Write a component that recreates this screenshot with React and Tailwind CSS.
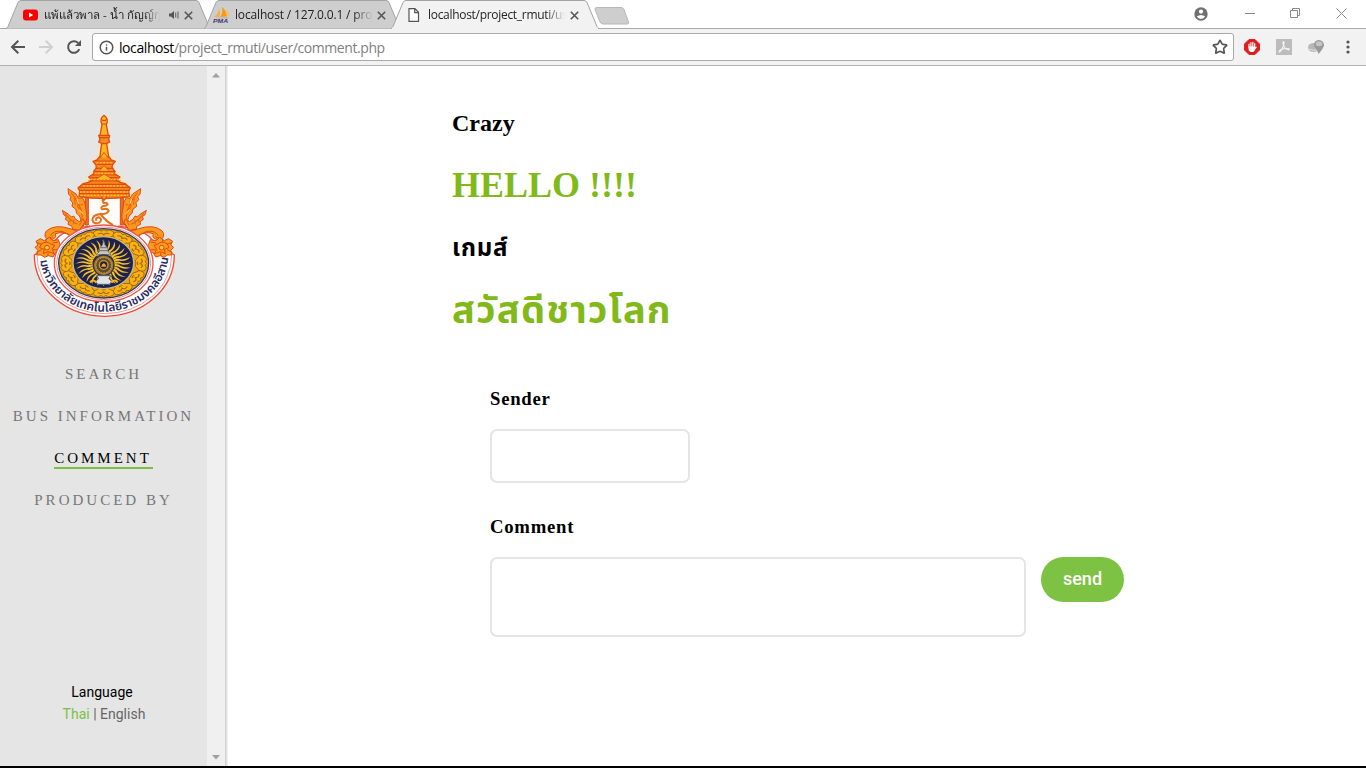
import { Star, Info } from "lucide-react";

const UI = "font-['Open_Sans','Noto_Sans',sans-serif]";

function TabShape({ width, active }) {
  const w = width;
  return (
    <svg className="absolute inset-0" width={w} height="29" viewBox={`0 0 ${w} 29`}>
      <path
        d={`M0 28.500 Q1.500 28 2 26.500 L12 2.500 Q13 0.500 15 0.500 H${w - 15} Q${w - 13} 0.500 ${w - 12} 2.500 L${w - 2} 26.500 Q${w - 1.5} 28 ${w} 28.500`}
        fill={active ? "#f2f2f2" : "#cecece"}
        stroke="#a3a3a3"
      />
      {active && <path d={`M1 28.500 H${w - 1}`} stroke="#f2f2f2" strokeWidth="2" />}
    </svg>
  );
}

function CloseX() {
  return (
    <svg className="shrink-0" width="9" height="9" viewBox="0 0 9 9"><path d="M.8.8 8.200 8.200M8.200.8.8 8.200" stroke="#555" strokeWidth="1.600" /></svg>
  );
}

function Tabs() {
  return (
    <div className={`flex h-[29px] items-start border-b border-[#aaa] bg-white pl-[6px] text-[12px] text-[#222] ${UI}`}>
      <div className="relative h-[29px] w-[205px] shrink-0">
        <TabShape width={205} />
        <div className="relative flex h-[30px] items-center pl-[17px]">
          <svg className="shrink-0" width="15" height="12" viewBox="0 0 15 12">
            <rect y="0.500" width="15" height="11" rx="3" fill="#f00" />
            <path d="M6 3.500 10.200 6 6 8.500Z" fill="#fff" />
          </svg>
          <span className="ml-[6px] w-[116px] overflow-hidden whitespace-nowrap text-[11.5px] leading-[20px] [mask-image:linear-gradient(90deg,#000_86%,transparent)]">แพ้แล้วพาล - น้ำ กัญญ์กุล</span>
          <svg className="ml-[9px] shrink-0" width="11" height="10" viewBox="0 0 11 10">
            <path d="M0 3.500H2L5 1V9L2 6.500H0Z" fill="#555" />
            <path d="M6.700 2.500V7.500M9 1.500V8.500" stroke="#666" strokeWidth="1.100" />
          </svg>
          <span className="ml-[4px] flex"><CloseX /></span>
        </div>
      </div>
      <div className="relative -ml-[7px] h-[29px] w-[197px] shrink-0">
        <TabShape width={197} />
        <div className="relative flex h-[30px] items-center pl-[9px]">
          <svg className="shrink-0" width="17" height="16" viewBox="0 0 17 16">
            <path d="M1 10Q5 7 6 2Q8 6 6.500 10Z" fill="#f8ad45" />
            <path d="M7.300 10Q10 6 9 0Q13 3 14 9.500Z" fill="#f89c0e" />
            <path d="M12 2Q16 5 16.500 9.500L14.600 9.500Q14 5 12 2Z" fill="#f6ba68" />
            <path d="M3 10.800 16 10.200 14 11.500H4Z" fill="#aeb0c4" />
            <text x="0" y="15.800" fontFamily="Liberation Sans" fontSize="6.200" fontWeight="700" fontStyle="italic" fill="#3a376e" textLength="15" lengthAdjust="spacingAndGlyphs">PMA</text>
          </svg>
          <span className="ml-[5px] w-[138px] overflow-hidden whitespace-nowrap tracking-[-0.16px] [mask-image:linear-gradient(90deg,#000_86%,transparent)]">localhost / 127.0.0.1 / proj</span>
          <span className="ml-[4px] flex"><CloseX /></span>
        </div>
      </div>
      <div className="relative -ml-[10px] h-[29px] w-[208px] shrink-0">
        <TabShape width={208} active />
        <div className="relative flex h-[30px] items-center pl-[17px]">
          <svg className="shrink-0" width="12" height="14" viewBox="0 0 12 14">
            <path d="M1 .7H7L10.500 4.300V13.300H1ZM6.700 1V4.600H10.300" fill="#fff" stroke="#555" strokeWidth="1.200" />
          </svg>
          <span className="ml-[8px] w-[137px] overflow-hidden whitespace-nowrap tracking-[-0.3px] [mask-image:linear-gradient(90deg,#000_86%,transparent)]">localhost/project_rmuti/us</span>
          <span className="ml-[5px] flex"><CloseX /></span>
        </div>
      </div>
      <svg className="mt-[6px] -ml-[5px]" width="36" height="20" viewBox="0 0 36 20">
        <path d="M3 1.500H27Q29 1.500 30 3.500L34.500 16Q35 18 33 18H9Q7 18 6 16L1 3.500Q.5 1.500 3 1.500Z" fill="#cecece" stroke="#b8b8b8" />
      </svg>
      <div className="ml-auto flex h-[27px] items-center text-[#888]">
        <svg width="14" height="14" viewBox="0 0 14 14">
          <circle cx="7" cy="7" r="6.700" fill="#707070" />
          <circle cx="7" cy="4.600" r="2.100" fill="#fff" />
          <path d="M2.800 9.600Q7 6.300 11.200 9.600Q9.500 12 7 12Q4.500 12 2.800 9.600Z" fill="#fff" />
        </svg>
        <svg className="ml-[37px]" width="11" height="11" viewBox="0 0 11 11"><path d="M0 5.500H10" stroke="currentColor" /></svg>
        <svg className="ml-[34px]" width="11" height="11" viewBox="0 0 11 11" fill="none" stroke="currentColor"><path d="M.5 2.500H7.500V9.500H.5ZM2.500 2.500V.5H9.500V7.500H7.500" /></svg>
        <svg className="mr-[19px] ml-[35px]" width="11" height="11" viewBox="0 0 11 11"><path d="M.5.5 10.500 10.500M10.500.5.5 10.500" stroke="currentColor" /></svg>
      </div>
    </div>
  );
}

function Toolbar() {
  return (
    <div className="flex h-[37px] items-center border-b border-[#b2b2b2] bg-[#f2f2f2]">
      <svg className="ml-[10px]" width="16" height="16" viewBox="0 0 16 16" fill="none" stroke="#555" strokeWidth="2"><path d="M15 8H2.500M8.300 1.700 2 8 8.300 14.300" /></svg>
      <svg className="ml-[12px]" width="16" height="16" viewBox="0 0 16 16" fill="none" stroke="#d0d0d0" strokeWidth="2"><path d="M1 8H13.500M7.700 1.700 14 8 7.700 14.300" /></svg>
      <svg className="ml-[12px]" width="16" height="16" viewBox="0 0 16 16"><path d="M13.300 10.200A5.800 5.800 0 1 1 12.100 4" fill="none" stroke="#555" strokeWidth="2" /><path d="M15 1V7H9Z" fill="#555" /></svg>
      <div className="ml-[10px] flex h-[28px] w-[1142px] items-center rounded-[3px] border border-[#a9a9a9] bg-white pr-[5px] pl-[6px]">
        <Info className="size-[15px] text-[#555]" strokeWidth={2.4} />
        <span className={`ml-[5px] text-[14px] tracking-[-0.42px] text-[#808080] ${UI}`}><span className="text-black">localhost</span>/project_rmuti/user/comment.php</span>
        <Star className="ml-auto size-[16px] text-[#555]" strokeWidth={2.5} />
      </div>
      <svg className="ml-[10px]" width="16" height="16" viewBox="0 0 16 16">
        <path d="M5 .5H11L15.500 5V11L11 15.500H5L.5 11V5Z" fill="#e51b1b" stroke="#e02525" />
        <path d="M5 8V5M6.900 8V3.500M8.800 8V3.300M10.700 8V4.500M10.800 10L12.200 8.200" stroke="#fff" strokeWidth="1.200" strokeLinecap="round" />
        <path d="M4.400 7.500H11.300L11 11L9.500 13H6.500L4.700 11.500Z" fill="#fff" />
      </svg>
      <svg className="ml-[16px]" width="16" height="16" viewBox="0 0 16 16">
        <path d="M0 0H16V16H0Z" fill="#bcbcbc" />
        <path d="M7.500 2.500C9 3 7.500 7 6 10C4.500 13 3 13.500 3 12.500C3.500 10.500 8 9.500 12 9.500C14 9.700 13.500 11 12 10.800C9 10 7 6.500 7 4Q6.800 2.600 7.500 2.500Z" fill="none" stroke="#f4f4f4" strokeWidth="1.100" />
      </svg>
      <svg className="ml-[16px]" width="18" height="16" viewBox="0 0 18 16">
        <ellipse cx="5.500" cy="8.500" rx="5.500" ry="4.500" fill="#b8b8b8" />
        <path d="M1 10Q5 12 9 11" stroke="#e1e1e1" fill="none" />
        <path d="M11 1A5 5 0 0 1 16 6.500Q15 10 10.500 15Q9.500 11 6 7A4.900 4.900 0 0 1 11 1Z" fill="#999" />
        <ellipse cx="11" cy="4.800" rx="3.300" ry="2.500" fill="#c6c6c6" />
      </svg>
      <svg className="ml-[20px]" width="4" height="14" viewBox="0 0 4 14" fill="#555"><circle cx="2" cy="2" r="1.600" /><circle cx="2" cy="7" r="1.600" /><circle cx="2" cy="12" r="1.600" /></svg>
    </div>
  );
}

const around = (n) => Array.from({ length: n }, (_, i) => (i * 360) / n);

function NagaSide() {
  return (
    <g fill="#fa9a1c" stroke="#df4a16" strokeWidth="3" strokeLinejoin="round">
      <path d="M196 278H205V360H196Z" fill="#f0702a" />
      <path d="M210 362Q176 385 150 371Q105 356 79 378Q68 396 86 405L100 402Q112 396 106 386Q134 377 151 394Q180 399 212 374Z" />
      <path d="M92 392Q98 376 126 379Q150 389 158 397M88 396Q94 403 100 394" fill="none" />
      <path d="M144 251L168 267L176 280L187 278L194 291L200 325Q206 352 176 377L160 371L182 352Q184 334 170 325L167 312L156 304L158 293L150 284L153 275L146 268Z" />
      <path d="M127 316L146 328L154 336L161 333L167 343L178 350L190 342L194 352L178 376L157 372L156 364L144 358L146 350L136 343L139 335L131 329Z" />
      <path d="M153 263Q173 286 183 314Q193 340 178 362M163 277L166 300M176 290L173 305L184 318M189 298L181 300M135 325Q149 345 172 358M150 341V352M162 344L160 358" fill="none" stroke="#ec6417" strokeWidth="3.500" />
      <path d="M171 282L176 296M178 314L190 328" fill="none" stroke="#ffd9a0" />
      <path d="M48 409L61 401L73 407L87 397L98 407L115 404L120 418L129 427L117 440L106 444L99 456L85 452L74 457L63 450L50 450L54 436L45 427L54 420Z" />
      <path d="M64 417Q80 406 92 417L104 421L96 433L103 446L84 440L70 446L73 433L59 428Z" fill="#f99a18" />
      <path d="M51 413L66 418M49 442L65 434M99 434L117 435M98 414L114 411M78 402V411M84 443V453" fill="none" />
      <circle cx="81" cy="428" r="7" fill="#ffc438" />
    </g>
  );
}

function Crest() {
  return (
    <svg width="170" height="220" viewBox="0 0 510 660" role="img">
      <path d="M43 450A209 181 0 0 0 463 450L398 406Q366 362 252 362Q138 362 106 406Z" fill="#fff" stroke="#fae7b5" strokeWidth="9" />
      <path d="M43 450A209 183 0 0 0 463 450L398 406Q366 362 252 362Q138 362 106 406Z" fill="#fff" stroke="#e54847" strokeWidth="4" />
      <path d="M51 451A202 175 0 0 0 455 451" fill="none" stroke="#ef8580" strokeWidth="2.500" />
      <path d="M204 364V280H300V364Z" fill="#fdfcf8" />
      <NagaSide />
      <g transform="translate(506 0) scale(-1 1)"><NagaSide /></g>
      <g stroke="#fae7b5" strokeWidth="9" fill="none">
        <path d="M252 31Q238 42 246 59L242 115L239 155L225 164L229 196L207 216L189 238L174 252L178 274M252 31Q266 42 260 59L264 115L266 155L280 164L277 196L299 216L316 238L331 252L328 274" strokeLinejoin="round" />
      </g>
      <g fill="#fcb421" stroke="#df4d14" strokeWidth="4" strokeLinejoin="round">
        <path d="M252 31Q237 42 246 59L240 91L245 115L242 136L240 155H266L263 136L260 115L265 91L259 59Q268 43 252 31Z" />
        <path d="M236 91H269L266 103L269 111L259 116H246L236 111L240 103Z" fill="#f48a1c" />
        <path d="M238 156H268L274 165L286 169L277 180L276 190L284 197L283 206L300 216L290 226L300 232L316 236L331 249L326 258L328 275Q253 286 177 275L179 258L174 249L189 236L206 232L216 226L206 216L222 206L222 197L229 190L228 180L219 169L231 165Z" fill="#f48a1c" />
        <path d="M244 43Q252 51 260 43M246 57H259M240 98H266M226 168H281M231 178H275M226 190H281M220 200H287M216 210H290M212 218H295M205 228H302M186 238H319M176 247H330M177 256H329M177 266H328" fill="none" stroke="#e34912" strokeWidth="3.500" />
        <path d="M230 173H277M224 205H285M211 223H297M190 243H319M180 261H327M182 271H325" fill="none" stroke="#ffc331" strokeDasharray="5 5" strokeWidth="4" />
        <path d="M241 158L252 142L264 158M239 197L252 182L267 197M229 222L252 207L276 222" fill="#ffb625" stroke="#e45a16" strokeWidth="3" />
        <path d="M252 280Q244 287 251 294Q261 292 263 298Q258 304 249 303Q239 309 248 313Q264 308 266 318Q259 329 241 327Q217 330 217 345Q221 359 238 353Q249 343 237 337Q226 337 229 347M241 327Q262 353 279 360" fill="none" stroke="#e6701a" strokeWidth="6" />
        <path d="M244 275L252 286L261 275" fill="#f69823" />
      </g>
      <ellipse cx="251" cy="475" rx="148" ry="115" fill="#fff" stroke="#ee5551" strokeWidth="4" />
      <ellipse cx="251" cy="475" rx="141" ry="109" fill="#fff" stroke="#f09690" strokeWidth="3" />
      <ellipse cx="251" cy="475" rx="135" ry="104" fill="#e9a41b" stroke="#333861" strokeWidth="4" />
      <g transform="translate(251 475) scale(1 .78)">
        {around(12).map((a) => (
          <g key={a} transform={`rotate(${a})`}>
            <path d="M-27 -124Q-15 -133 -6 -124Q0 -134 8 -124Q16 -132 27 -124Q38 -106 21 -102Q14 -92 0 -95Q-13 -92 -21 -102Q-38 -108 -27 -124Z" fill="#ffb00c" stroke="#7a5a2a" strokeWidth="2.500" />
            <path d="M-17 -112Q-6 -121 0 -110Q8 -121 17 -112M-6 -103Q0 -98 6 -103" fill="none" stroke="#9b6c20" strokeWidth="4" />
          </g>
        ))}
      </g>
      <ellipse cx="250" cy="473" rx="91" ry="78" fill="#1c2152" stroke="#c7b987" strokeWidth="4" />
      <g transform="translate(250 474) scale(1 .84)">
        {around(28).map((a) => (
          <path key={a} transform={`rotate(${a})`} d="M-3 -32Q-8 -44 -1 -54Q3 -64 -3 -84Q9 -70 5 -55Q0 -44 4 -32Z" fill="#f7bf20" />
        ))}
      </g>
      <path d="M251 404L255 421L263 428L264 440L272 447L268 457H233L230 447L238 440L239 428L247 421Z" fill="#c9c7b7" stroke="#555b70" strokeWidth="2" />
      <path d="M241 428H261M239 437H264M234 449H269" stroke="#6c6d72" strokeWidth="3" />
      <circle cx="251" cy="481" r="31" fill="#a77d28" stroke="#323351" strokeWidth="4" />
      <circle cx="251" cy="481" r="23" fill="#5c4c39" stroke="#d69e28" strokeWidth="3" strokeDasharray="5 3" />
      <circle cx="251" cy="480" r="13" fill="#202246" stroke="#d29c27" strokeWidth="4" />
      <path d="M243 485Q252 465 259 485Z" fill="#eea920" />
      <path d="M230 512H272L267 521L275 529L269 538H233L227 529L236 521Z" fill="#e1e4e5" stroke="#525c79" strokeWidth="3" />
      <path d="M210 532Q220 520 229 533M274 533Q284 520 293 532" fill="none" stroke="#f2b91e" strokeWidth="6" />
      <path id="crest-ring" d="M60 466C74 566 165 620 252 620C339 620 429 566 444 466" fill="none" />
      <text fill="#272b63" fontFamily="'Noto Sans','Noto Sans Thai',sans-serif" fontSize="35" fontWeight="600">
        <textPath href="#crest-ring" textLength="546" lengthAdjust="spacingAndGlyphs">มหาวิทยาลัยเทคโนโลยีราชมงคลอีสาน</textPath>
      </text>
    </svg>
  );
}

const links = ["SEARCH", "BUS INFORMATION", "COMMENT", "PRODUCED BY"];

function Sidebar() {
  return (
    <aside className="flex w-[207px] shrink-0 flex-col items-center bg-[#e5e5e5]">
      <div className="mt-[39px] mr-[-3px] h-[220px] w-[170px]"><Crest /></div>
      <nav className="mt-[40px] flex flex-col items-center gap-[21px] font-['Liberation_Serif',serif] text-[15px] leading-[19px] tracking-[3px] text-[#777]">
        {links.map((t) => (
          <a key={t} className={t === "COMMENT" ? "mb-px h-[20px] border-b-2 border-[#7ac143] pr-px whitespace-nowrap text-black" : "h-[21px] whitespace-nowrap"}>{t}</a>
        ))}
      </nav>
      <div className="mt-auto mb-[41px] flex flex-col items-center pl-px font-[Roboto,sans-serif] text-[14px] leading-[22px] text-[#666]">
        <span className="mr-[4px] text-black">Language</span>
        <span><span className="text-[#7ac143]">Thai</span> | English</span>
      </div>
    </aside>
  );
}

function Arrow({ down }) {
  return (
    <svg width="8" height="5" viewBox="0 0 8 5"><path d={down ? "M0 0H8L4 4.500Z" : "M0 4.500H8L4 0Z"} fill="#a0a0a0" /></svg>
  );
}

export default function App() {
  return (
    <div className="flex h-[768px] w-[1366px] flex-col overflow-hidden border-b-2 border-black bg-white">
      <Tabs />
      <Toolbar />
      <div className="flex min-h-0 flex-1">
        <Sidebar />
        <div className="flex w-[18px] shrink-0 flex-col items-center justify-between bg-[#f0f0f0] pt-[7px] pr-px pb-[6px]">
          <Arrow />
          <Arrow down />
        </div>
        <div className="w-[3px] shrink-0 bg-linear-to-r from-[#cacaca] to-[#f8f8f8]" />
        <main className="flex flex-1 flex-col pl-[224px] font-['Liberation_Serif','Noto_Sans_Thai',serif] font-bold text-black">
          <h2 className="mt-[43px] h-[28px] text-[24px] leading-[28px]">Crazy</h2>
          <h1 className="mt-[27px] h-[42px] text-[36px] leading-[42px] text-[#80b918]">HELLO !!!!</h1>
          <h2 className="mt-[28px] h-[28px] text-[24px] leading-[28px] tracking-[0.8px]">เกมส์</h2>
          <h1 className="mt-[27px] h-[42px] text-[38px] leading-[42px] tracking-[1.2px] text-[#80b918]">สวัสดีชาวโลก</h1>
          <form className="mt-[57px] flex flex-col pl-[38px]">
            <label className="h-[22px] text-[18.72px] leading-[22px] tracking-[0.75px]">Sender</label>
            <div className="mt-[19px] h-[54px] w-[200px] rounded-[7px] border-2 border-[#e5e5e5]" />
            <label className="mt-[33px] h-[22px] text-[18.72px] leading-[22px] tracking-[0.75px]">Comment</label>
            <div className="mt-[19px] flex items-start">
              <div className="h-[80px] w-[536px] rounded-[7px] border-2 border-[#e5e5e5]" />
              <button type="button" className="ml-[15px] flex h-[45px] w-[83px] items-start justify-center rounded-full bg-[#7dc243] font-[Roboto,sans-serif] text-[18px] leading-[43px] font-medium text-white">send</button>
            </div>
          </form>
        </main>
      </div>
    </div>
  );
}
